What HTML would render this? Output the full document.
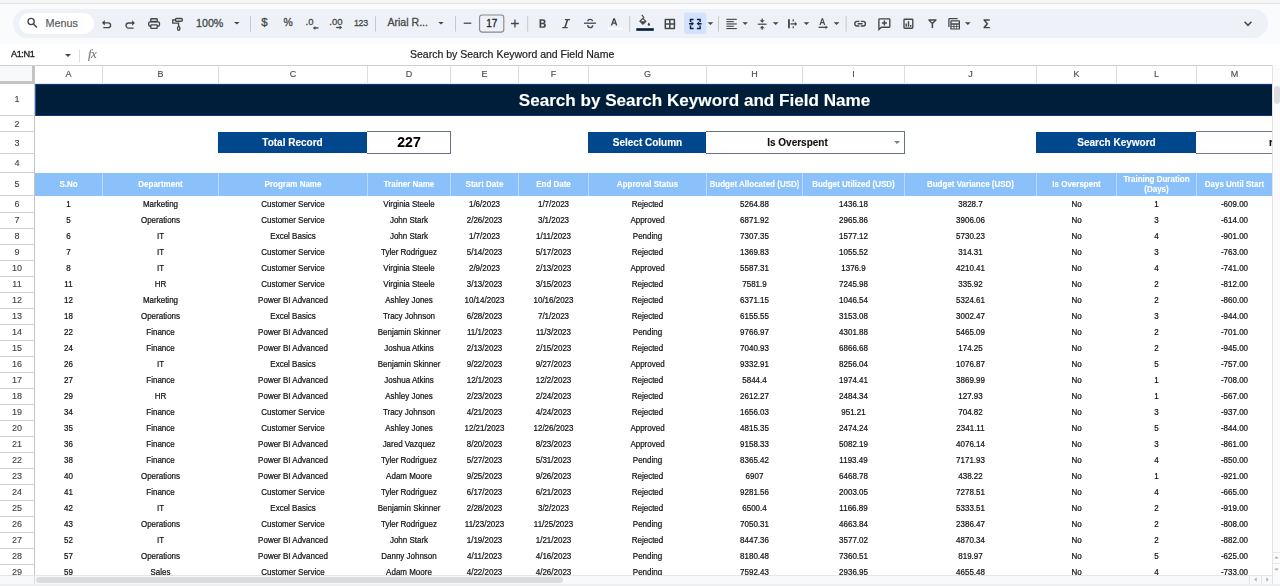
<!DOCTYPE html>
<html><head><meta charset="utf-8"><title>Sheet</title>
<style>
*{box-sizing:border-box}
html,body{margin:0;padding:0}
div{-webkit-text-stroke-width:0.12px}
body{width:1280px;height:586px;overflow:hidden;position:relative;background:#fff;font-family:"Liberation Sans",sans-serif;color:#202124}
.a{position:absolute}
.c{position:absolute;text-align:center;white-space:nowrap;overflow:hidden}
.t{font-size:8.6px;color:#111;line-height:16px;height:16px;padding-top:0px;-webkit-text-stroke:0.22px #111;transform:scaleX(0.93)}
.ch{font-size:9px;color:#45484c;line-height:18px;top:65px;height:18px}
.rh{font-size:9px;color:#3c3f43;left:0;width:34px;text-align:center}
.hl{position:absolute;height:1px;background:#dcdcdc}
.vl{position:absolute;width:1px;background:#dcdcdc}
.hd{font-size:8.6px;color:#fff;font-weight:bold;line-height:9.5px;transform:scaleX(0.93);display:flex;align-items:center;justify-content:center}
.ic{position:absolute;color:#444746}
.dd{position:absolute;width:0;height:0;border-left:3px solid transparent;border-right:3px solid transparent;border-top:3px solid #444746}
.sep{position:absolute;width:1px;background:#c7c7c7;top:16px;height:15px}
</style></head><body><div style="position:absolute;left:0;top:0;width:1280px;height:586px;overflow:hidden;filter:blur(0.3px)">

<div class="a" style="left:0;top:0;width:1280px;height:3px;background:#f6f5f5"></div>
<div class="a" style="left:0;top:3px;width:1280px;height:1px;background:#e3e3e3"></div>
<div class="a" style="left:0;top:4px;width:1280px;height:40px;background:#f9fbfd"></div>
<div class="a" style="left:13px;top:9px;width:1255px;height:29px;border-radius:15px;background:#eef2f8"></div>
<div class="a" style="left:19px;top:13px;width:75px;height:21px;border-radius:11px;background:#fff"></div>
<svg class="a" style="left:0;top:0" width="1280" height="44" viewBox="0 0 1280 44">
<g fill="none" stroke="#444746" stroke-width="1.35">
<!-- search -->
<circle cx="31.1" cy="21.5" r="3.1" stroke-width="1.35"/>
<path d="M33.4 23.9 L37 27.6" stroke-width="1.5"/>
<!-- undo -->
<path d="M103.2 22.8 H108.2 A2.4 2.4 0 0 1 108.2 27.6 H103.3"/>
<!-- redo -->
<path d="M133.6 23 H128.6 A2.55 2.55 0 0 0 128.6 28.1 H133.6"/>
<!-- print -->
<rect x="150.8" y="18.7" width="6.4" height="2.8" rx="0.6"/>
<rect x="148.7" y="21.9" width="10.8" height="4.3" rx="1.4"/>
<rect x="150.8" y="24.9" width="6.4" height="3.4" rx="0.6" fill="#eef2f8"/>
<!-- paint roller -->
<rect x="175.3" y="18.5" width="7.1" height="2.7" rx="1.3"/>
<path d="M175.3 19.9 H172.8 V23.1 H178.6 V26.2"/>
<ellipse cx="178.7" cy="28.4" rx="1.2" ry="1.9"/>
<!-- borders -->
<rect x="665.3" y="19.4" width="9.1" height="9.1" rx="0.3" stroke-width="1.5"/>
<path d="M669.85 19.4 V28.5 M665.3 23.95 H674.4" stroke-width="1.5"/>
<!-- link -->
<path d="M859.4 21.4 H857.1 A2.3 2.3 0 0 0 857.1 26 H859.4 M860.8 21.4 H863.1 A2.3 2.3 0 0 1 863.1 26 H860.8 M857.6 23.7 H862.6" stroke-width="1.4"/>
<!-- comment -->
<path d="M878.9 29.5 V19.6 Q878.9 18.9 879.6 18.9 H889.2 Q889.8 18.9 889.8 19.6 V26.5 Q889.8 27.2 889.2 27.2 H881.3 Z" stroke-width="1.35"/>
<path d="M884.4 20.6 V25.6 M881.9 23.1 H886.9" stroke-width="1.5"/>
<!-- chart -->
<rect x="904" y="19.2" width="8.8" height="9" rx="0.8"/>
<path d="M906.2 23.6 V26.8 M908.5 21.2 V26.8 M910.7 25 V26.8" stroke-width="1.4"/>
<!-- filter -->
<path d="M928.9 20 H936 L932.4 23.6 Z" stroke-width="1.35" stroke-linejoin="round"/>
<path d="M932.4 23.4 V28.1" stroke-width="1.5"/>
<!-- table calc back -->
<path d="M948.9 27 V19.2 Q948.9 18.5 949.6 18.5 H957.6" stroke-width="1.25"/>
<!-- wrap -->
<path d="M788.95 19.3 V28.3" stroke-width="1.8"/>
<path d="M793.2 19.3 V21.5 M793.2 26.2 V28.3" stroke-width="1.2"/>
<path d="M790.5 23.9 H795.3" stroke-width="1.3"/>
<!-- text rotation arrow -->
<path d="M818.6 27.3 H826" stroke-width="1.3"/>
<!-- valign line -->
<path d="M757.8 24.2 H766.6" stroke-width="1.2"/>
<path d="M762.2 18.4 V21.2 M762.2 27 V29.7" stroke-width="1.2"/>
<!-- strikethrough -->
<path d="M587.8 21.2 Q588 19.4 590.2 19.4 Q592.2 19.4 592.6 21.2 M587.6 25.2 Q587.9 27.6 590.2 27.6 Q592.6 27.6 592.8 25.4" stroke-width="1.35"/>
<path d="M584 23.2 H596" stroke-width="1.3"/>
<!-- minus plus -->
<path d="M463.7 23.2 H471.3" stroke-width="1.3"/>
<path d="M511 23.5 H518.9 M514.95 19.6 V27.4" stroke-width="1.3"/>
<!-- chevron right end -->
<path d="M1244.6 21.8 L1248 25.3 L1251.4 21.8" stroke-width="1.5"/>
</g>
<g fill="#444746">
<!-- undo/redo heads -->
<path d="M101.9 22.8 L104.8 20 V25.6 Z"/>
<path d="M134.9 23 L132.1 20.2 V25.8 Z"/>
<!-- dropdown triangles -->
<path d="M234 21.9 H239.6 L236.8 24.6 Z"/>
<path d="M438.3 21.9 H443.6 L440.95 24.6 Z"/>
<path d="M707.6 22.3 H713.3 L710.45 25 Z"/>
<path d="M742.5 22.3 H747.8 L745.15 24.9 Z"/>
<path d="M772.8 22.3 H778.6 L775.7 24.9 Z"/>
<path d="M803.6 22.3 H809.3 L806.45 24.9 Z"/>
<path d="M833.7 22.3 H839.4 L836.55 24.9 Z"/>
<path d="M964.9 22.3 H970.7 L967.8 24.9 Z"/>
<!-- valign arrow heads -->
<path d="M759.7 20.2 H764.7 L762.2 22.7 Z"/>
<path d="M759.7 28.2 H764.7 L762.2 25.7 Z"/>
<path d="M760.2 19.6 L762.2 17.8 L764.2 19.6 Z" opacity="0"/>
<!-- wrap arrow head -->
<path d="M794.8 21.7 L797.2 23.9 L794.8 26.1 Z"/>
<!-- text rotation arrow head -->
<path d="M825.6 25.6 L828 27.3 L825.6 29 Z"/>
<!-- align lines -->
<rect x="726.4" y="18.8" width="10.4" height="1.1"/>
<rect x="726.4" y="21.1" width="7.4" height="1.1"/>
<rect x="726.4" y="23.4" width="10.4" height="1.1"/>
<rect x="726.4" y="25.7" width="7.4" height="1.1"/>
<rect x="726.4" y="28" width="10.4" height="1.1"/>
<!-- calc body -->
<path d="M951.2 20.3 H959.1 Q960 20.3 960 21.2 V28.7 Q960 29.6 959.1 29.6 H951.2 Q950.3 29.6 950.3 28.7 V21.2 Q950.3 20.3 951.2 20.3 Z M951.6 21.5 V23.3 H958.7 V21.5 Z M951.6 24.8 V26.3 H953.5 V24.8 Z M954.4 24.8 V26.3 H956.3 V24.8 Z M957.1 24.8 V26.3 H958.8 V24.8 Z M951.6 27.1 V28.6 H953.5 V27.1 Z M954.4 27.1 V28.6 H956.3 V27.1 Z M957.1 27.1 V28.6 H958.8 V27.1 Z" fill-rule="evenodd"/>
<!-- fill bucket -->
<path d="M641.4 15.3 L642.3 14.6 L644.6 17.6 L643.7 18.3 Z"/>
<path d="M642.9 17.6 L646.7 21.4 L642.9 25 L639.1 21.3 Z M642.9 19.2 L640.8 21.3 H645 Z" fill-rule="evenodd"/>
<path d="M648.8 22.6 Q650.1 24.2 650.1 24.6 A1.25 1.25 0 0 1 647.6 24.6 Q647.6 24.2 648.8 22.6 Z"/>
<rect x="636.3" y="28.2" width="17.5" height="2.6" fill="#001e3a"/>
<!-- merge highlight -->
<rect x="684" y="12.5" width="22.5" height="21.5" rx="3" fill="#d3e3fd"/>
<!-- text rotation A -->
<path d="M819.4 24.9 L821.7 18.2 H823 L825.3 24.9 H824 L823.45 23.2 H821.25 L820.7 24.9 Z M821.6 22.1 H823.1 L822.35 19.8 Z" fill-rule="evenodd"/>
<!-- B -->
<path d="M539.5 19.3 H542.9 Q545.6 19.3 545.6 21.4 Q545.6 22.8 544.5 23.3 Q545.9 23.8 545.9 25.4 Q545.9 27.8 542.9 27.8 H539.5 Z M541.2 20.7 V22.8 H542.7 Q543.9 22.8 543.9 21.75 Q543.9 20.7 542.7 20.7 Z M541.2 24.2 V26.4 H542.9 Q544.2 26.4 544.2 25.3 Q544.2 24.2 542.9 24.2 Z" fill-rule="evenodd"/>
<!-- I -->
<path d="M564.9 19 H570.1 V20.3 H568.2 L565.9 26.9 H567.6 V28.3 H562.3 V26.9 H564.3 L566.5 20.3 H564.9 Z"/>
<!-- A text color -->
<path d="M610.8 25.6 L613.3 18.2 H614.9 L617.4 25.6 H615.9 L615.3 23.7 H612.9 L612.3 25.6 Z M613.3 22.5 H614.9 L614.1 19.9 Z" fill-rule="evenodd"/>
<!-- sigma -->
<path d="M983.5 19.3 H989.8 V20.7 H985.8 L988.3 23.8 L985.8 26.9 H989.9 V28.3 H983.5 V27.1 L986.4 23.8 L983.5 20.5 Z"/>
<!-- .0 arrows -->
<path d="M312.8 27.9 L315.3 25.9 V29.9 Z"/>
<rect x="314.8" y="27.25" width="3.7" height="1.35"/>
<path d="M342.1 27.5 L339.6 25.5 V29.5 Z"/>
<rect x="336.2" y="26.85" width="3.7" height="1.35"/>
</g>
<!-- separators -->
<g fill="#c7c7c7">
<rect x="250" y="16.3" width="1" height="15.3"/>
<rect x="375" y="16.3" width="1" height="15.3"/>
<rect x="455" y="16.3" width="1" height="15.3"/>
<rect x="527.2" y="16.3" width="1" height="15.3"/>
<rect x="629.2" y="16.3" width="1" height="15.3"/>
<rect x="718" y="16.3" width="1" height="15.3"/>
<rect x="845.6" y="16.3" width="1" height="15.3"/>
</g>
<!-- merge icon -->
<g fill="none" stroke="#0b1f49" stroke-width="1.45">
<path d="M693.6 19.4 H690.5 V21.9 M690.5 25.4 V28.5 H693.6 M696.9 19.4 H700.1 V21.9 M700.1 25.4 V28.5 H696.9"/>
<path d="M689 23.7 H692.2 M701.6 23.7 H698.4"/>
</g>
<g fill="#0b1f49">
<path d="M691.5 21.6 L694 23.7 L691.5 25.8 Z"/>
<path d="M699.1 21.6 L696.6 23.7 L699.1 25.8 Z"/>
</g>
<!-- font size box -->
<rect x="479.6" y="15" width="24.2" height="17.1" rx="2.6" fill="none" stroke="#85878a" stroke-width="1.1"/>
<!-- A underline (white) -->
<rect x="608" y="27.8" width="15" height="2" fill="#ffffff" opacity="0.8"/>
</svg>
<div class="a" style="left:45.5px;top:16px;font-size:10.8px;line-height:14px;-webkit-text-stroke-width:0.2px;color:#5b5e62">Menus</div>
<div class="a" style="left:196px;top:16.2px;font-size:10.7px;line-height:14px;-webkit-text-stroke-width:0.28px;color:#444746">100%</div>
<div class="a" style="left:261.3px;top:15px;font-size:11.5px;line-height:14px;-webkit-text-stroke-width:0.28px;color:#444746">$</div>
<div class="a" style="left:283.6px;top:16.2px;font-size:10.4px;line-height:14px;-webkit-text-stroke-width:0.28px;color:#444746">%</div>
<div class="a" style="left:305.5px;top:14.5px;font-size:9.5px;line-height:14px;-webkit-text-stroke-width:0.28px;color:#444746">.0</div>
<div class="a" style="left:329.3px;top:14.5px;font-size:9.5px;line-height:14px;-webkit-text-stroke-width:0.28px;color:#444746">.00</div>
<div class="a" style="left:354px;top:16px;font-size:8.8px;line-height:14px;-webkit-text-stroke-width:0.28px;color:#444746;letter-spacing:-0.3px">123</div>
<div class="a" style="left:387.4px;top:15.3px;font-size:10.6px;line-height:14px;-webkit-text-stroke-width:0.28px;color:#444746">Arial R...</div>
<div class="a" style="left:486.2px;top:17.2px;font-size:10px;line-height:14px;-webkit-text-stroke-width:0.3px;color:#1f1f1f">17</div>

<div class="a" style="left:11px;top:48.3px;font-size:9.2px;line-height:12px;color:#1f1f1f;letter-spacing:-0.45px;-webkit-text-stroke:0.35px #1f1f1f">A1:N1</div>
<div class="dd" style="left:65px;top:54px;border-left-width:3px;border-right-width:3px;border-top-width:3.5px"></div>
<div class="a" style="left:79px;top:50px;width:1px;height:12px;background:#dadce0"></div>
<div class="a" style="left:88px;top:46.5px;font-size:13px;line-height:14px;color:#74787c;font-style:italic;font-family:'Liberation Serif',serif;letter-spacing:-0.5px">fx</div>
<div class="a" style="left:410px;top:47px;font-size:10.5px;line-height:14px;color:#202124;-webkit-text-stroke-width:0.2px">Search by Search Keyword and Field Name</div>
<div class="a" style="left:0;top:65px;width:1280px;height:1px;background:#cfcfcf"></div>
<div class="a" style="left:0;top:66px;width:32px;height:15px;background:#f8f9fa"></div>
<div class="a" style="left:32px;top:66px;width:3px;height:18px;background:#c4c4c4"></div>
<div class="a" style="left:0;top:81px;width:35px;height:3px;background:#c4c4c4"></div>
<div class="c ch" style="left:35px;width:67px">A</div>
<div class="vl" style="left:102px;top:66px;height:18px"></div>
<div class="c ch" style="left:103px;width:115px">B</div>
<div class="vl" style="left:218px;top:66px;height:18px"></div>
<div class="c ch" style="left:219px;width:148px">C</div>
<div class="vl" style="left:367px;top:66px;height:18px"></div>
<div class="c ch" style="left:368px;width:82px">D</div>
<div class="vl" style="left:450px;top:66px;height:18px"></div>
<div class="c ch" style="left:451px;width:67px">E</div>
<div class="vl" style="left:518px;top:66px;height:18px"></div>
<div class="c ch" style="left:519px;width:69px">F</div>
<div class="vl" style="left:588px;top:66px;height:18px"></div>
<div class="c ch" style="left:589px;width:117px">G</div>
<div class="vl" style="left:706px;top:66px;height:18px"></div>
<div class="c ch" style="left:707px;width:95px">H</div>
<div class="vl" style="left:802px;top:66px;height:18px"></div>
<div class="c ch" style="left:803px;width:101px">I</div>
<div class="vl" style="left:904px;top:66px;height:18px"></div>
<div class="c ch" style="left:905px;width:131px">J</div>
<div class="vl" style="left:1036px;top:66px;height:18px"></div>
<div class="c ch" style="left:1037px;width:79px">K</div>
<div class="vl" style="left:1116px;top:66px;height:18px"></div>
<div class="c ch" style="left:1117px;width:79px">L</div>
<div class="vl" style="left:1196px;top:66px;height:18px"></div>
<div class="c ch" style="left:1197px;width:75px">M</div>
<div class="vl" style="left:1272px;top:66px;height:18px"></div>
<div class="a" style="left:35px;top:83px;width:1237px;height:1px;background:#dfe3f5"></div>
<div class="a" style="left:34px;top:84px;width:1px;height:499px;background:#c4c4c4"></div>
<div class="c rh" style="top:83px;height:32px;line-height:32px">1</div>
<div class="hl" style="left:0;top:115px;width:34px;height:1px;background:#d2d2d2"></div>
<div class="c rh" style="top:116px;height:16px;line-height:16px">2</div>
<div class="hl" style="left:0;top:131px;width:34px;height:1px;background:#d2d2d2"></div>
<div class="c rh" style="top:132px;height:22px;line-height:22px">3</div>
<div class="hl" style="left:0;top:153px;width:34px;height:1px;background:#d2d2d2"></div>
<div class="c rh" style="top:154px;height:19px;line-height:19px">4</div>
<div class="hl" style="left:0;top:172px;width:34px;height:1px;background:#d2d2d2"></div>
<div class="c rh" style="top:173px;height:23px;line-height:23px">5</div>
<div class="hl" style="left:0;top:195px;width:34px;height:1px;background:#d2d2d2"></div>
<div class="c rh" style="top:196px;height:16px;line-height:16px">6</div>
<div class="hl" style="left:0;top:212px;width:34px;height:1px;background:#d2d2d2"></div>
<div class="c rh" style="top:212px;height:16px;line-height:16px">7</div>
<div class="hl" style="left:0;top:228px;width:34px;height:1px;background:#d2d2d2"></div>
<div class="c rh" style="top:228px;height:16px;line-height:16px">8</div>
<div class="hl" style="left:0;top:244px;width:34px;height:1px;background:#d2d2d2"></div>
<div class="c rh" style="top:244px;height:16px;line-height:16px">9</div>
<div class="hl" style="left:0;top:260px;width:34px;height:1px;background:#d2d2d2"></div>
<div class="c rh" style="top:260px;height:16px;line-height:16px">10</div>
<div class="hl" style="left:0;top:276px;width:34px;height:1px;background:#d2d2d2"></div>
<div class="c rh" style="top:276px;height:16px;line-height:16px">11</div>
<div class="hl" style="left:0;top:292px;width:34px;height:1px;background:#d2d2d2"></div>
<div class="c rh" style="top:292px;height:16px;line-height:16px">12</div>
<div class="hl" style="left:0;top:308px;width:34px;height:1px;background:#d2d2d2"></div>
<div class="c rh" style="top:308px;height:16px;line-height:16px">13</div>
<div class="hl" style="left:0;top:324px;width:34px;height:1px;background:#d2d2d2"></div>
<div class="c rh" style="top:324px;height:16px;line-height:16px">14</div>
<div class="hl" style="left:0;top:340px;width:34px;height:1px;background:#d2d2d2"></div>
<div class="c rh" style="top:340px;height:16px;line-height:16px">15</div>
<div class="hl" style="left:0;top:356px;width:34px;height:1px;background:#d2d2d2"></div>
<div class="c rh" style="top:356px;height:16px;line-height:16px">16</div>
<div class="hl" style="left:0;top:372px;width:34px;height:1px;background:#d2d2d2"></div>
<div class="c rh" style="top:372px;height:16px;line-height:16px">17</div>
<div class="hl" style="left:0;top:388px;width:34px;height:1px;background:#d2d2d2"></div>
<div class="c rh" style="top:388px;height:16px;line-height:16px">18</div>
<div class="hl" style="left:0;top:404px;width:34px;height:1px;background:#d2d2d2"></div>
<div class="c rh" style="top:404px;height:16px;line-height:16px">19</div>
<div class="hl" style="left:0;top:420px;width:34px;height:1px;background:#d2d2d2"></div>
<div class="c rh" style="top:420px;height:16px;line-height:16px">20</div>
<div class="hl" style="left:0;top:436px;width:34px;height:1px;background:#d2d2d2"></div>
<div class="c rh" style="top:436px;height:16px;line-height:16px">21</div>
<div class="hl" style="left:0;top:452px;width:34px;height:1px;background:#d2d2d2"></div>
<div class="c rh" style="top:452px;height:16px;line-height:16px">22</div>
<div class="hl" style="left:0;top:468px;width:34px;height:1px;background:#d2d2d2"></div>
<div class="c rh" style="top:468px;height:16px;line-height:16px">23</div>
<div class="hl" style="left:0;top:484px;width:34px;height:1px;background:#d2d2d2"></div>
<div class="c rh" style="top:484px;height:16px;line-height:16px">24</div>
<div class="hl" style="left:0;top:500px;width:34px;height:1px;background:#d2d2d2"></div>
<div class="c rh" style="top:500px;height:16px;line-height:16px">25</div>
<div class="hl" style="left:0;top:516px;width:34px;height:1px;background:#d2d2d2"></div>
<div class="c rh" style="top:516px;height:16px;line-height:16px">26</div>
<div class="hl" style="left:0;top:532px;width:34px;height:1px;background:#d2d2d2"></div>
<div class="c rh" style="top:532px;height:16px;line-height:16px">27</div>
<div class="hl" style="left:0;top:548px;width:34px;height:1px;background:#d2d2d2"></div>
<div class="c rh" style="top:548px;height:16px;line-height:16px">28</div>
<div class="hl" style="left:0;top:564px;width:34px;height:1px;background:#d2d2d2"></div>
<div class="c rh" style="top:564px;height:16px;line-height:16px">29</div>
<div class="hl" style="left:0;top:580px;width:34px;height:1px;background:#d2d2d2"></div>
<div class="a" style="left:35px;top:84px;width:1237px;height:32px;background:#001e3a;border-top:1px solid #0d3a80;border-bottom:1px solid #0d3a80;border-left:1px solid #2a5bb0"></div>
<div class="a" style="left:508.5px;top:84.6px;width:372px;height:32px;line-height:32px;text-align:center;white-space:nowrap;font-size:17.1px;font-weight:bold;color:#fff">Search by Search Keyword and Field Name</div>
<div class="a" style="left:218px;top:132px;width:149px;height:21px;background:#01478d;"></div>
<div class="c" style="left:218px;top:132px;width:149px;height:21px;line-height:21px;font-size:10px;font-weight:bold;color:#fff;">Total Record</div>
<div class="a" style="left:367px;top:131px;width:84px;height:22.5px;background:#fff;border:1.8px solid #66727f;border-left:none;"></div>
<div class="c" style="left:367px;top:132px;width:84px;height:21px;line-height:21px;font-size:14px;font-weight:bold;color:#000;">227</div>
<div class="a" style="left:588px;top:132px;width:119px;height:21px;background:#01478d;"></div>
<div class="c" style="left:588px;top:132px;width:119px;height:21px;line-height:21px;font-size:10px;font-weight:bold;color:#fff;">Select Column</div>
<div class="a" style="left:706px;top:131px;width:199px;height:22.5px;background:#fff;border:1.8px solid #66727f;border-left:none;"></div>
<div class="c" style="left:706px;top:132px;width:199px;height:21px;line-height:21px;font-size:10px;font-weight:bold;color:#111;padding-right:16px">Is Overspent</div>
<div class="dd" style="left:894px;top:140.8px;border-top-color:#7d7d7d;border-left-width:3px;border-right-width:3px;border-top-width:3.5px"></div>
<div class="a" style="left:1036px;top:132px;width:161px;height:21px;background:#01478d;"></div>
<div class="c" style="left:1036px;top:132px;width:161px;height:21px;line-height:21px;font-size:10px;font-weight:bold;color:#fff;">Search Keyword</div>
<div class="a" style="left:1196px;top:131px;width:84px;height:22.5px;background:#fff;border:1.8px solid #6f7b88;border-right:none;border-left:none"></div>
<div class="a" style="left:1269px;top:132px;height:21px;line-height:21px;font-size:10px;font-weight:bold;color:#111">r</div>
<div class="a" style="left:35px;top:173px;width:1237px;height:23px;background:#8ac1fb"></div>
<div class="c hd" style="left:35px;top:173px;width:67px;height:23px">S.No</div>
<div class="a" style="left:102px;top:173px;width:1px;height:23px;background:#b9d9fc"></div>
<div class="c hd" style="left:103px;top:173px;width:115px;height:23px">Department</div>
<div class="a" style="left:218px;top:173px;width:1px;height:23px;background:#b9d9fc"></div>
<div class="c hd" style="left:219px;top:173px;width:148px;height:23px">Program Name</div>
<div class="a" style="left:367px;top:173px;width:1px;height:23px;background:#b9d9fc"></div>
<div class="c hd" style="left:368px;top:173px;width:82px;height:23px">Trainer Name</div>
<div class="a" style="left:450px;top:173px;width:1px;height:23px;background:#b9d9fc"></div>
<div class="c hd" style="left:451px;top:173px;width:67px;height:23px">Start Date</div>
<div class="a" style="left:518px;top:173px;width:1px;height:23px;background:#b9d9fc"></div>
<div class="c hd" style="left:519px;top:173px;width:69px;height:23px">End Date</div>
<div class="a" style="left:588px;top:173px;width:1px;height:23px;background:#b9d9fc"></div>
<div class="c hd" style="left:589px;top:173px;width:117px;height:23px">Approval Status</div>
<div class="a" style="left:706px;top:173px;width:1px;height:23px;background:#b9d9fc"></div>
<div class="c hd" style="left:707px;top:173px;width:95px;height:23px">Budget Allocated (USD)</div>
<div class="a" style="left:802px;top:173px;width:1px;height:23px;background:#b9d9fc"></div>
<div class="c hd" style="left:803px;top:173px;width:101px;height:23px">Budget Utilized (USD)</div>
<div class="a" style="left:904px;top:173px;width:1px;height:23px;background:#b9d9fc"></div>
<div class="c hd" style="left:905px;top:173px;width:131px;height:23px">Budget Variance (USD)</div>
<div class="a" style="left:1036px;top:173px;width:1px;height:23px;background:#b9d9fc"></div>
<div class="c hd" style="left:1037px;top:173px;width:79px;height:23px">Is Overspent</div>
<div class="a" style="left:1116px;top:173px;width:1px;height:23px;background:#b9d9fc"></div>
<div class="c hd" style="left:1117px;top:173px;width:79px;height:23px">Training Duration<br>(Days)</div>
<div class="a" style="left:1196px;top:173px;width:1px;height:23px;background:#b9d9fc"></div>
<div class="c hd" style="left:1197px;top:173px;width:75px;height:23px">Days Until Start</div>
<div class="c t" style="left:35px;top:196px;width:67px">1</div>
<div class="c t" style="left:103px;top:196px;width:115px">Marketing</div>
<div class="c t" style="left:219px;top:196px;width:148px">Customer Service</div>
<div class="c t" style="left:368px;top:196px;width:82px">Virginia Steele</div>
<div class="c t" style="left:451px;top:196px;width:67px">1/6/2023</div>
<div class="c t" style="left:519px;top:196px;width:69px">1/7/2023</div>
<div class="c t" style="left:589px;top:196px;width:117px">Rejected</div>
<div class="c t" style="left:707px;top:196px;width:95px">5264.88</div>
<div class="c t" style="left:803px;top:196px;width:101px">1436.18</div>
<div class="c t" style="left:905px;top:196px;width:131px">3828.7</div>
<div class="c t" style="left:1037px;top:196px;width:79px">No</div>
<div class="c t" style="left:1117px;top:196px;width:79px">1</div>
<div class="c t" style="left:1197px;top:196px;width:75px">-609.00</div>
<div class="c t" style="left:35px;top:212px;width:67px">5</div>
<div class="c t" style="left:103px;top:212px;width:115px">Operations</div>
<div class="c t" style="left:219px;top:212px;width:148px">Customer Service</div>
<div class="c t" style="left:368px;top:212px;width:82px">John Stark</div>
<div class="c t" style="left:451px;top:212px;width:67px">2/26/2023</div>
<div class="c t" style="left:519px;top:212px;width:69px">3/1/2023</div>
<div class="c t" style="left:589px;top:212px;width:117px">Approved</div>
<div class="c t" style="left:707px;top:212px;width:95px">6871.92</div>
<div class="c t" style="left:803px;top:212px;width:101px">2965.86</div>
<div class="c t" style="left:905px;top:212px;width:131px">3906.06</div>
<div class="c t" style="left:1037px;top:212px;width:79px">No</div>
<div class="c t" style="left:1117px;top:212px;width:79px">3</div>
<div class="c t" style="left:1197px;top:212px;width:75px">-614.00</div>
<div class="c t" style="left:35px;top:228px;width:67px">6</div>
<div class="c t" style="left:103px;top:228px;width:115px">IT</div>
<div class="c t" style="left:219px;top:228px;width:148px">Excel Basics</div>
<div class="c t" style="left:368px;top:228px;width:82px">John Stark</div>
<div class="c t" style="left:451px;top:228px;width:67px">1/7/2023</div>
<div class="c t" style="left:519px;top:228px;width:69px">1/11/2023</div>
<div class="c t" style="left:589px;top:228px;width:117px">Pending</div>
<div class="c t" style="left:707px;top:228px;width:95px">7307.35</div>
<div class="c t" style="left:803px;top:228px;width:101px">1577.12</div>
<div class="c t" style="left:905px;top:228px;width:131px">5730.23</div>
<div class="c t" style="left:1037px;top:228px;width:79px">No</div>
<div class="c t" style="left:1117px;top:228px;width:79px">4</div>
<div class="c t" style="left:1197px;top:228px;width:75px">-901.00</div>
<div class="c t" style="left:35px;top:244px;width:67px">7</div>
<div class="c t" style="left:103px;top:244px;width:115px">IT</div>
<div class="c t" style="left:219px;top:244px;width:148px">Customer Service</div>
<div class="c t" style="left:368px;top:244px;width:82px">Tyler Rodriguez</div>
<div class="c t" style="left:451px;top:244px;width:67px">5/14/2023</div>
<div class="c t" style="left:519px;top:244px;width:69px">5/17/2023</div>
<div class="c t" style="left:589px;top:244px;width:117px">Rejected</div>
<div class="c t" style="left:707px;top:244px;width:95px">1369.83</div>
<div class="c t" style="left:803px;top:244px;width:101px">1055.52</div>
<div class="c t" style="left:905px;top:244px;width:131px">314.31</div>
<div class="c t" style="left:1037px;top:244px;width:79px">No</div>
<div class="c t" style="left:1117px;top:244px;width:79px">3</div>
<div class="c t" style="left:1197px;top:244px;width:75px">-763.00</div>
<div class="c t" style="left:35px;top:260px;width:67px">8</div>
<div class="c t" style="left:103px;top:260px;width:115px">IT</div>
<div class="c t" style="left:219px;top:260px;width:148px">Customer Service</div>
<div class="c t" style="left:368px;top:260px;width:82px">Virginia Steele</div>
<div class="c t" style="left:451px;top:260px;width:67px">2/9/2023</div>
<div class="c t" style="left:519px;top:260px;width:69px">2/13/2023</div>
<div class="c t" style="left:589px;top:260px;width:117px">Approved</div>
<div class="c t" style="left:707px;top:260px;width:95px">5587.31</div>
<div class="c t" style="left:803px;top:260px;width:101px">1376.9</div>
<div class="c t" style="left:905px;top:260px;width:131px">4210.41</div>
<div class="c t" style="left:1037px;top:260px;width:79px">No</div>
<div class="c t" style="left:1117px;top:260px;width:79px">4</div>
<div class="c t" style="left:1197px;top:260px;width:75px">-741.00</div>
<div class="c t" style="left:35px;top:276px;width:67px">11</div>
<div class="c t" style="left:103px;top:276px;width:115px">HR</div>
<div class="c t" style="left:219px;top:276px;width:148px">Customer Service</div>
<div class="c t" style="left:368px;top:276px;width:82px">Virginia Steele</div>
<div class="c t" style="left:451px;top:276px;width:67px">3/13/2023</div>
<div class="c t" style="left:519px;top:276px;width:69px">3/15/2023</div>
<div class="c t" style="left:589px;top:276px;width:117px">Rejected</div>
<div class="c t" style="left:707px;top:276px;width:95px">7581.9</div>
<div class="c t" style="left:803px;top:276px;width:101px">7245.98</div>
<div class="c t" style="left:905px;top:276px;width:131px">335.92</div>
<div class="c t" style="left:1037px;top:276px;width:79px">No</div>
<div class="c t" style="left:1117px;top:276px;width:79px">2</div>
<div class="c t" style="left:1197px;top:276px;width:75px">-812.00</div>
<div class="c t" style="left:35px;top:292px;width:67px">12</div>
<div class="c t" style="left:103px;top:292px;width:115px">Marketing</div>
<div class="c t" style="left:219px;top:292px;width:148px">Power BI Advanced</div>
<div class="c t" style="left:368px;top:292px;width:82px">Ashley Jones</div>
<div class="c t" style="left:451px;top:292px;width:67px">10/14/2023</div>
<div class="c t" style="left:519px;top:292px;width:69px">10/16/2023</div>
<div class="c t" style="left:589px;top:292px;width:117px">Rejected</div>
<div class="c t" style="left:707px;top:292px;width:95px">6371.15</div>
<div class="c t" style="left:803px;top:292px;width:101px">1046.54</div>
<div class="c t" style="left:905px;top:292px;width:131px">5324.61</div>
<div class="c t" style="left:1037px;top:292px;width:79px">No</div>
<div class="c t" style="left:1117px;top:292px;width:79px">2</div>
<div class="c t" style="left:1197px;top:292px;width:75px">-860.00</div>
<div class="c t" style="left:35px;top:308px;width:67px">18</div>
<div class="c t" style="left:103px;top:308px;width:115px">Operations</div>
<div class="c t" style="left:219px;top:308px;width:148px">Excel Basics</div>
<div class="c t" style="left:368px;top:308px;width:82px">Tracy Johnson</div>
<div class="c t" style="left:451px;top:308px;width:67px">6/28/2023</div>
<div class="c t" style="left:519px;top:308px;width:69px">7/1/2023</div>
<div class="c t" style="left:589px;top:308px;width:117px">Rejected</div>
<div class="c t" style="left:707px;top:308px;width:95px">6155.55</div>
<div class="c t" style="left:803px;top:308px;width:101px">3153.08</div>
<div class="c t" style="left:905px;top:308px;width:131px">3002.47</div>
<div class="c t" style="left:1037px;top:308px;width:79px">No</div>
<div class="c t" style="left:1117px;top:308px;width:79px">3</div>
<div class="c t" style="left:1197px;top:308px;width:75px">-944.00</div>
<div class="c t" style="left:35px;top:324px;width:67px">22</div>
<div class="c t" style="left:103px;top:324px;width:115px">Finance</div>
<div class="c t" style="left:219px;top:324px;width:148px">Power BI Advanced</div>
<div class="c t" style="left:368px;top:324px;width:82px">Benjamin Skinner</div>
<div class="c t" style="left:451px;top:324px;width:67px">11/1/2023</div>
<div class="c t" style="left:519px;top:324px;width:69px">11/3/2023</div>
<div class="c t" style="left:589px;top:324px;width:117px">Pending</div>
<div class="c t" style="left:707px;top:324px;width:95px">9766.97</div>
<div class="c t" style="left:803px;top:324px;width:101px">4301.88</div>
<div class="c t" style="left:905px;top:324px;width:131px">5465.09</div>
<div class="c t" style="left:1037px;top:324px;width:79px">No</div>
<div class="c t" style="left:1117px;top:324px;width:79px">2</div>
<div class="c t" style="left:1197px;top:324px;width:75px">-701.00</div>
<div class="c t" style="left:35px;top:340px;width:67px">24</div>
<div class="c t" style="left:103px;top:340px;width:115px">Finance</div>
<div class="c t" style="left:219px;top:340px;width:148px">Power BI Advanced</div>
<div class="c t" style="left:368px;top:340px;width:82px">Joshua Atkins</div>
<div class="c t" style="left:451px;top:340px;width:67px">2/13/2023</div>
<div class="c t" style="left:519px;top:340px;width:69px">2/15/2023</div>
<div class="c t" style="left:589px;top:340px;width:117px">Rejected</div>
<div class="c t" style="left:707px;top:340px;width:95px">7040.93</div>
<div class="c t" style="left:803px;top:340px;width:101px">6866.68</div>
<div class="c t" style="left:905px;top:340px;width:131px">174.25</div>
<div class="c t" style="left:1037px;top:340px;width:79px">No</div>
<div class="c t" style="left:1117px;top:340px;width:79px">2</div>
<div class="c t" style="left:1197px;top:340px;width:75px">-945.00</div>
<div class="c t" style="left:35px;top:356px;width:67px">26</div>
<div class="c t" style="left:103px;top:356px;width:115px">IT</div>
<div class="c t" style="left:219px;top:356px;width:148px">Excel Basics</div>
<div class="c t" style="left:368px;top:356px;width:82px">Benjamin Skinner</div>
<div class="c t" style="left:451px;top:356px;width:67px">9/22/2023</div>
<div class="c t" style="left:519px;top:356px;width:69px">9/27/2023</div>
<div class="c t" style="left:589px;top:356px;width:117px">Approved</div>
<div class="c t" style="left:707px;top:356px;width:95px">9332.91</div>
<div class="c t" style="left:803px;top:356px;width:101px">8256.04</div>
<div class="c t" style="left:905px;top:356px;width:131px">1076.87</div>
<div class="c t" style="left:1037px;top:356px;width:79px">No</div>
<div class="c t" style="left:1117px;top:356px;width:79px">5</div>
<div class="c t" style="left:1197px;top:356px;width:75px">-757.00</div>
<div class="c t" style="left:35px;top:372px;width:67px">27</div>
<div class="c t" style="left:103px;top:372px;width:115px">Finance</div>
<div class="c t" style="left:219px;top:372px;width:148px">Power BI Advanced</div>
<div class="c t" style="left:368px;top:372px;width:82px">Joshua Atkins</div>
<div class="c t" style="left:451px;top:372px;width:67px">12/1/2023</div>
<div class="c t" style="left:519px;top:372px;width:69px">12/2/2023</div>
<div class="c t" style="left:589px;top:372px;width:117px">Rejected</div>
<div class="c t" style="left:707px;top:372px;width:95px">5844.4</div>
<div class="c t" style="left:803px;top:372px;width:101px">1974.41</div>
<div class="c t" style="left:905px;top:372px;width:131px">3869.99</div>
<div class="c t" style="left:1037px;top:372px;width:79px">No</div>
<div class="c t" style="left:1117px;top:372px;width:79px">1</div>
<div class="c t" style="left:1197px;top:372px;width:75px">-708.00</div>
<div class="c t" style="left:35px;top:388px;width:67px">29</div>
<div class="c t" style="left:103px;top:388px;width:115px">HR</div>
<div class="c t" style="left:219px;top:388px;width:148px">Power BI Advanced</div>
<div class="c t" style="left:368px;top:388px;width:82px">Ashley Jones</div>
<div class="c t" style="left:451px;top:388px;width:67px">2/23/2023</div>
<div class="c t" style="left:519px;top:388px;width:69px">2/24/2023</div>
<div class="c t" style="left:589px;top:388px;width:117px">Rejected</div>
<div class="c t" style="left:707px;top:388px;width:95px">2612.27</div>
<div class="c t" style="left:803px;top:388px;width:101px">2484.34</div>
<div class="c t" style="left:905px;top:388px;width:131px">127.93</div>
<div class="c t" style="left:1037px;top:388px;width:79px">No</div>
<div class="c t" style="left:1117px;top:388px;width:79px">1</div>
<div class="c t" style="left:1197px;top:388px;width:75px">-567.00</div>
<div class="c t" style="left:35px;top:404px;width:67px">34</div>
<div class="c t" style="left:103px;top:404px;width:115px">Finance</div>
<div class="c t" style="left:219px;top:404px;width:148px">Customer Service</div>
<div class="c t" style="left:368px;top:404px;width:82px">Tracy Johnson</div>
<div class="c t" style="left:451px;top:404px;width:67px">4/21/2023</div>
<div class="c t" style="left:519px;top:404px;width:69px">4/24/2023</div>
<div class="c t" style="left:589px;top:404px;width:117px">Rejected</div>
<div class="c t" style="left:707px;top:404px;width:95px">1656.03</div>
<div class="c t" style="left:803px;top:404px;width:101px">951.21</div>
<div class="c t" style="left:905px;top:404px;width:131px">704.82</div>
<div class="c t" style="left:1037px;top:404px;width:79px">No</div>
<div class="c t" style="left:1117px;top:404px;width:79px">3</div>
<div class="c t" style="left:1197px;top:404px;width:75px">-937.00</div>
<div class="c t" style="left:35px;top:420px;width:67px">35</div>
<div class="c t" style="left:103px;top:420px;width:115px">Finance</div>
<div class="c t" style="left:219px;top:420px;width:148px">Customer Service</div>
<div class="c t" style="left:368px;top:420px;width:82px">Ashley Jones</div>
<div class="c t" style="left:451px;top:420px;width:67px">12/21/2023</div>
<div class="c t" style="left:519px;top:420px;width:69px">12/26/2023</div>
<div class="c t" style="left:589px;top:420px;width:117px">Approved</div>
<div class="c t" style="left:707px;top:420px;width:95px">4815.35</div>
<div class="c t" style="left:803px;top:420px;width:101px">2474.24</div>
<div class="c t" style="left:905px;top:420px;width:131px">2341.11</div>
<div class="c t" style="left:1037px;top:420px;width:79px">No</div>
<div class="c t" style="left:1117px;top:420px;width:79px">5</div>
<div class="c t" style="left:1197px;top:420px;width:75px">-844.00</div>
<div class="c t" style="left:35px;top:436px;width:67px">36</div>
<div class="c t" style="left:103px;top:436px;width:115px">Finance</div>
<div class="c t" style="left:219px;top:436px;width:148px">Power BI Advanced</div>
<div class="c t" style="left:368px;top:436px;width:82px">Jared Vazquez</div>
<div class="c t" style="left:451px;top:436px;width:67px">8/20/2023</div>
<div class="c t" style="left:519px;top:436px;width:69px">8/23/2023</div>
<div class="c t" style="left:589px;top:436px;width:117px">Approved</div>
<div class="c t" style="left:707px;top:436px;width:95px">9158.33</div>
<div class="c t" style="left:803px;top:436px;width:101px">5082.19</div>
<div class="c t" style="left:905px;top:436px;width:131px">4076.14</div>
<div class="c t" style="left:1037px;top:436px;width:79px">No</div>
<div class="c t" style="left:1117px;top:436px;width:79px">3</div>
<div class="c t" style="left:1197px;top:436px;width:75px">-861.00</div>
<div class="c t" style="left:35px;top:452px;width:67px">38</div>
<div class="c t" style="left:103px;top:452px;width:115px">Finance</div>
<div class="c t" style="left:219px;top:452px;width:148px">Power BI Advanced</div>
<div class="c t" style="left:368px;top:452px;width:82px">Tyler Rodriguez</div>
<div class="c t" style="left:451px;top:452px;width:67px">5/27/2023</div>
<div class="c t" style="left:519px;top:452px;width:69px">5/31/2023</div>
<div class="c t" style="left:589px;top:452px;width:117px">Pending</div>
<div class="c t" style="left:707px;top:452px;width:95px">8365.42</div>
<div class="c t" style="left:803px;top:452px;width:101px">1193.49</div>
<div class="c t" style="left:905px;top:452px;width:131px">7171.93</div>
<div class="c t" style="left:1037px;top:452px;width:79px">No</div>
<div class="c t" style="left:1117px;top:452px;width:79px">4</div>
<div class="c t" style="left:1197px;top:452px;width:75px">-850.00</div>
<div class="c t" style="left:35px;top:468px;width:67px">40</div>
<div class="c t" style="left:103px;top:468px;width:115px">Operations</div>
<div class="c t" style="left:219px;top:468px;width:148px">Power BI Advanced</div>
<div class="c t" style="left:368px;top:468px;width:82px">Adam Moore</div>
<div class="c t" style="left:451px;top:468px;width:67px">9/25/2023</div>
<div class="c t" style="left:519px;top:468px;width:69px">9/26/2023</div>
<div class="c t" style="left:589px;top:468px;width:117px">Rejected</div>
<div class="c t" style="left:707px;top:468px;width:95px">6907</div>
<div class="c t" style="left:803px;top:468px;width:101px">6468.78</div>
<div class="c t" style="left:905px;top:468px;width:131px">438.22</div>
<div class="c t" style="left:1037px;top:468px;width:79px">No</div>
<div class="c t" style="left:1117px;top:468px;width:79px">1</div>
<div class="c t" style="left:1197px;top:468px;width:75px">-921.00</div>
<div class="c t" style="left:35px;top:484px;width:67px">41</div>
<div class="c t" style="left:103px;top:484px;width:115px">Finance</div>
<div class="c t" style="left:219px;top:484px;width:148px">Customer Service</div>
<div class="c t" style="left:368px;top:484px;width:82px">Tyler Rodriguez</div>
<div class="c t" style="left:451px;top:484px;width:67px">6/17/2023</div>
<div class="c t" style="left:519px;top:484px;width:69px">6/21/2023</div>
<div class="c t" style="left:589px;top:484px;width:117px">Rejected</div>
<div class="c t" style="left:707px;top:484px;width:95px">9281.56</div>
<div class="c t" style="left:803px;top:484px;width:101px">2003.05</div>
<div class="c t" style="left:905px;top:484px;width:131px">7278.51</div>
<div class="c t" style="left:1037px;top:484px;width:79px">No</div>
<div class="c t" style="left:1117px;top:484px;width:79px">4</div>
<div class="c t" style="left:1197px;top:484px;width:75px">-665.00</div>
<div class="c t" style="left:35px;top:500px;width:67px">42</div>
<div class="c t" style="left:103px;top:500px;width:115px">IT</div>
<div class="c t" style="left:219px;top:500px;width:148px">Excel Basics</div>
<div class="c t" style="left:368px;top:500px;width:82px">Benjamin Skinner</div>
<div class="c t" style="left:451px;top:500px;width:67px">2/28/2023</div>
<div class="c t" style="left:519px;top:500px;width:69px">3/2/2023</div>
<div class="c t" style="left:589px;top:500px;width:117px">Rejected</div>
<div class="c t" style="left:707px;top:500px;width:95px">6500.4</div>
<div class="c t" style="left:803px;top:500px;width:101px">1166.89</div>
<div class="c t" style="left:905px;top:500px;width:131px">5333.51</div>
<div class="c t" style="left:1037px;top:500px;width:79px">No</div>
<div class="c t" style="left:1117px;top:500px;width:79px">2</div>
<div class="c t" style="left:1197px;top:500px;width:75px">-919.00</div>
<div class="c t" style="left:35px;top:516px;width:67px">43</div>
<div class="c t" style="left:103px;top:516px;width:115px">Operations</div>
<div class="c t" style="left:219px;top:516px;width:148px">Customer Service</div>
<div class="c t" style="left:368px;top:516px;width:82px">Tyler Rodriguez</div>
<div class="c t" style="left:451px;top:516px;width:67px">11/23/2023</div>
<div class="c t" style="left:519px;top:516px;width:69px">11/25/2023</div>
<div class="c t" style="left:589px;top:516px;width:117px">Pending</div>
<div class="c t" style="left:707px;top:516px;width:95px">7050.31</div>
<div class="c t" style="left:803px;top:516px;width:101px">4663.84</div>
<div class="c t" style="left:905px;top:516px;width:131px">2386.47</div>
<div class="c t" style="left:1037px;top:516px;width:79px">No</div>
<div class="c t" style="left:1117px;top:516px;width:79px">2</div>
<div class="c t" style="left:1197px;top:516px;width:75px">-808.00</div>
<div class="c t" style="left:35px;top:532px;width:67px">52</div>
<div class="c t" style="left:103px;top:532px;width:115px">IT</div>
<div class="c t" style="left:219px;top:532px;width:148px">Power BI Advanced</div>
<div class="c t" style="left:368px;top:532px;width:82px">John Stark</div>
<div class="c t" style="left:451px;top:532px;width:67px">1/19/2023</div>
<div class="c t" style="left:519px;top:532px;width:69px">1/21/2023</div>
<div class="c t" style="left:589px;top:532px;width:117px">Rejected</div>
<div class="c t" style="left:707px;top:532px;width:95px">8447.36</div>
<div class="c t" style="left:803px;top:532px;width:101px">3577.02</div>
<div class="c t" style="left:905px;top:532px;width:131px">4870.34</div>
<div class="c t" style="left:1037px;top:532px;width:79px">No</div>
<div class="c t" style="left:1117px;top:532px;width:79px">2</div>
<div class="c t" style="left:1197px;top:532px;width:75px">-882.00</div>
<div class="c t" style="left:35px;top:548px;width:67px">57</div>
<div class="c t" style="left:103px;top:548px;width:115px">Operations</div>
<div class="c t" style="left:219px;top:548px;width:148px">Power BI Advanced</div>
<div class="c t" style="left:368px;top:548px;width:82px">Danny Johnson</div>
<div class="c t" style="left:451px;top:548px;width:67px">4/11/2023</div>
<div class="c t" style="left:519px;top:548px;width:69px">4/16/2023</div>
<div class="c t" style="left:589px;top:548px;width:117px">Pending</div>
<div class="c t" style="left:707px;top:548px;width:95px">8180.48</div>
<div class="c t" style="left:803px;top:548px;width:101px">7360.51</div>
<div class="c t" style="left:905px;top:548px;width:131px">819.97</div>
<div class="c t" style="left:1037px;top:548px;width:79px">No</div>
<div class="c t" style="left:1117px;top:548px;width:79px">5</div>
<div class="c t" style="left:1197px;top:548px;width:75px">-625.00</div>
<div class="c t" style="left:35px;top:564px;width:67px">59</div>
<div class="c t" style="left:103px;top:564px;width:115px">Sales</div>
<div class="c t" style="left:219px;top:564px;width:148px">Customer Service</div>
<div class="c t" style="left:368px;top:564px;width:82px">Adam Moore</div>
<div class="c t" style="left:451px;top:564px;width:67px">4/22/2023</div>
<div class="c t" style="left:519px;top:564px;width:69px">4/26/2023</div>
<div class="c t" style="left:589px;top:564px;width:117px">Pending</div>
<div class="c t" style="left:707px;top:564px;width:95px">7592.43</div>
<div class="c t" style="left:803px;top:564px;width:101px">2936.95</div>
<div class="c t" style="left:905px;top:564px;width:131px">4655.48</div>
<div class="c t" style="left:1037px;top:564px;width:79px">No</div>
<div class="c t" style="left:1117px;top:564px;width:79px">4</div>
<div class="c t" style="left:1197px;top:564px;width:75px">-733.00</div>
<div class="a" style="left:0;top:575px;width:1272px;height:9px;background:#f8f9fa;border-top:1px solid #e6e6e6"></div>
<div class="a" style="left:36px;top:577px;width:527px;height:6px;border-radius:3px;background:#dadce0"></div>
<div class="a" style="left:34px;top:575px;width:1px;height:9px;background:#dcdcdc"></div>
<div class="a" style="left:0;top:584px;width:1280px;height:2px;background:#eeeff1"></div>
<div class="a" style="left:1272px;top:65px;width:8px;height:519px;background:#fbfbfb;border-left:1px solid #e3e3e3"></div>
<div class="a" style="left:1274px;top:86px;width:6px;height:18px;border-radius:3px;background:#dadce0"></div>
<svg class="a" style="left:1240px;top:540px" width="40" height="46" viewBox="1240 540 40 46">
<g fill="none" stroke="#e6e6e6" stroke-width="1">
<path d="M1272 552.5 H1280 M1272 563.5 H1280 M1249.5 575 V584 M1261.5 575 V584"/>
</g>
<g fill="#a8acb0">
<path d="M1274.3 558.6 L1276.5 556.2 L1278.7 558.6 Z"/>
<path d="M1274.3 568.4 L1276.5 570.8 L1278.7 568.4 Z"/>
<path d="M1256.6 577.3 L1254.4 579.5 L1256.6 581.7 Z"/>
<path d="M1266.4 577.3 L1268.6 579.5 L1266.4 581.7 Z"/>
</g></svg>
</div></body></html>
